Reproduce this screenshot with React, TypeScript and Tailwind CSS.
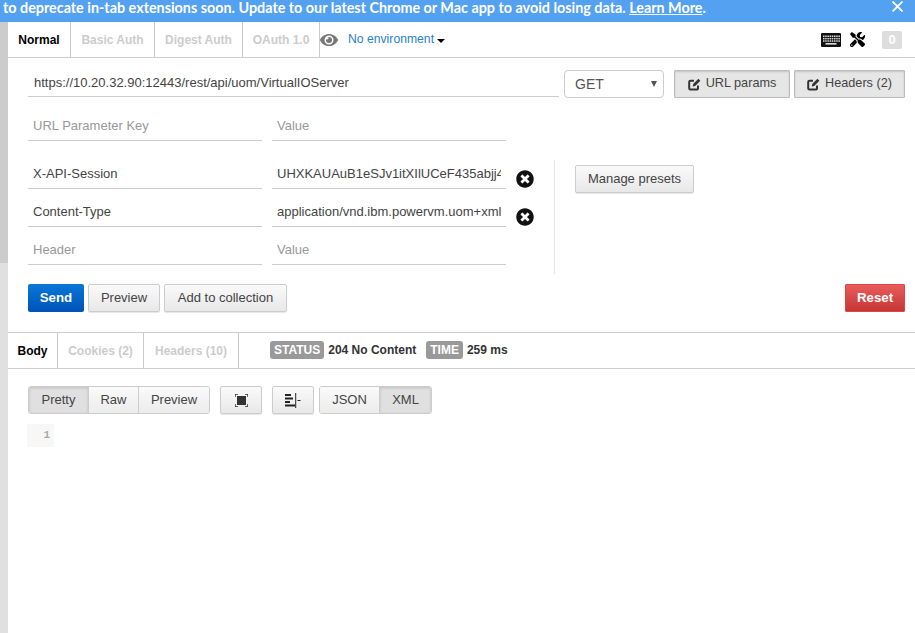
import { FaEye, FaTimesCircle, FaTools } from "react-icons/fa";

function Keyboard() {
  const keys = [];
  for (let r = 0; r < 3; r++) {
    for (let c = 0; c < 8; c++) {
      keys.push(<rect key={`${r}-${c}`} x={2 + c * 2.2} y={2.5 + r * 2.4} width="1.5" height="1.5" fill="#ddd" />);
    }
  }
  return (
    <svg width="20" height="14" viewBox="0 0 20 14">
      <rect width="20" height="14" rx="1" fill="#111" />
      {keys}
      <rect x="4.5" y="10" width="11" height="1.6" fill="#ddd" />
    </svg>
  );
}

function EditIcon() {
  return (
    <svg width="13" height="13" viewBox="0 0 13 13" fill="none">
      <path d="M10 7.5V10.5Q10 11.5 9 11.5H2.5Q1.2 11.5 1.2 10.2V4Q1.2 2.8 2.5 2.8H6" stroke="#333" strokeWidth="2" />
      <path d="M4.8 8.4L5.2 6L10.4 0.8L12.4 2.8L7.2 8Z" fill="#333" />
    </svg>
  );
}

function Field({ value, placeholder, w }: { value?: string; placeholder?: string; w: string }) {
  return (
    <div className={`${w} h-[38px] flex items-end pb-[6px] px-[5px] border-b border-[#ccc] text-[13px] leading-[17px] ${value ? "text-[#444]" : "text-[#999]"}`}>
      <span className="block w-full overflow-hidden whitespace-nowrap">{value || placeholder}</span>
    </div>
  );
}

function Row({ k, v, remove }: { k?: string; v?: string; remove?: boolean }) {
  return (
    <div className="flex items-end gap-[10px]">
      <Field value={k} placeholder={k ? undefined : "Header"} w="w-[234px]" />
      <Field value={v} placeholder={v ? undefined : "Value"} w="w-[234px]" />
      {remove && <FaTimesCircle className="text-[18px] text-[#111] mb-[1px]" />}
    </div>
  );
}

const tabOff = "h-full flex items-center justify-center border-r border-[#ccc] font-bold text-[#ccc] text-[12px]";
const btn = "flex items-center justify-center border border-[#ccc] rounded-[2px] text-[#444] text-[13px] bg-gradient-to-b from-[#fafafa] to-[#e8e8e8] shadow-[0_1px_1px_rgba(0,0,0,0.1)]";
const seg = "h-full flex items-center justify-center text-[#444] text-[13px]";
const segOn = "bg-[#e0e0e0] shadow-[inset_0_1px_3px_rgba(0,0,0,0.15)]";
const segOff = "bg-gradient-to-b from-[#fafafa] to-[#ececec]";
const toggle = "h-[28px] flex items-center justify-center gap-[5px] border border-[#bbb] bg-[#e6e6e6] rounded-[1px] text-[12.7px] text-[#444] shadow-[inset_0_1px_2px_rgba(0,0,0,0.15)]";

export default function App() {
  return (
    <div className="w-[915px] h-[633px] overflow-hidden bg-white flex flex-col font-['Liberation_Sans',sans-serif]">
      <div className="h-[22px] shrink-0 bg-[#54a1f2] text-white flex items-start pl-[3px] pr-[12px] justify-between font-['Lato',sans-serif] font-bold text-[14.35px] leading-[15px] whitespace-nowrap">
        <span>
          to deprecate in-tab extensions soon. Update to our latest Chrome or Mac app to avoid losing data. <span className="underline">Learn More</span>.
        </span>
        <svg width="11" height="11" viewBox="0 0 11 11" stroke="white" strokeWidth="1.8" className="mt-[1px]">
          <path d="M.5 .5 L10.5 10.5 M10.5 .5 L.5 10.5" />
        </svg>
      </div>

      <div className="flex-1 flex min-h-0">
        <div className="w-[8px] shrink-0 flex flex-col">
          <div className="h-[241px] bg-[#ccc]" />
          <div className="flex-1 bg-[#e0e0e0]" />
        </div>

        <div className="flex-1 min-w-0 flex flex-col">
          <div className="h-[36px] shrink-0 flex items-center border-b border-[#ccc]">
            <div className="w-[63px] h-full flex items-center justify-center border-r border-[#ccc] font-bold text-black text-[12px] bg-white">Normal</div>
            <div className={`w-[84px] ${tabOff}`}>Basic Auth</div>
            <div className={`w-[88px] ${tabOff}`}>Digest Auth</div>
            <div className={`w-[77px] ${tabOff}`}>OAuth 1.0</div>
            <FaEye className="text-[18px] text-[#777]" />
            <span className="ml-[10px] text-[12.2px] text-[#2a7fc9]">No environment</span>
            <span className="ml-[3px] mt-[2px] w-0 h-0 border-x-[4px] border-x-transparent border-t-[4px] border-t-black" />
            <div className="ml-auto flex items-center mr-[13px]">
              <Keyboard />
              <FaTools className="text-[15px] text-black ml-[9px]" />
              <span className="ml-[17px] w-[20px] h-[18px] bg-[#ddd] rounded-[2px] text-white font-bold text-[13px] flex items-center justify-center">0</span>
            </div>
          </div>

          <div className="flex items-end pl-[20px] pr-[10px] h-[40px] shrink-0">
            <div className="w-[531px] h-[30px] mb-[1px] pt-[2px] flex items-center px-[6px] border-b border-[#ccc] text-[13px] text-[#444] whitespace-nowrap">
              https://10.20.32.90:12443/rest/api/uom/VirtualIOServer
            </div>
            <div className="ml-[5px] w-[100px] h-[28px] flex items-center justify-between pl-[10px] pr-[6px] border border-[#ccc] rounded-[4px] text-[14px] text-[#555]">
              GET
              <span className="w-0 h-0 border-x-[3.5px] border-x-transparent border-t-[6px] border-t-[#555]" />
            </div>
            <div className={`ml-[10px] w-[116px] ${toggle}`}>
              <EditIcon />URL params
            </div>
            <div className={`ml-[4px] w-[111px] ${toggle}`}>
              <EditIcon />Headers (2)
            </div>
          </div>

          <div className="pl-[20px] flex gap-[10px] h-[43px] shrink-0 items-end">
            <Field placeholder="URL Parameter Key" w="w-[234px]" />
            <Field placeholder="Value" w="w-[234px]" />
          </div>

          <div className="pl-[20px] flex mt-[10px] shrink-0">
            <div className="flex flex-col">
              <Row k="X-API-Session" v="UHXKAUAuB1eSJv1itXIlUCeF435abjj4" remove />
              <Row k="Content-Type" v="application/vnd.ibm.powervm.uom+xml" remove />
              <Row />
            </div>
            <div className="ml-[20px] h-[114px] mt-[9px] pl-[20px] border-l border-[#e5e5e5]">
              <div className={`${btn} w-[119px] h-[28px] mt-[5px]`}>Manage presets</div>
            </div>
          </div>

          <div className="pl-[20px] pr-[10px] flex items-center h-[28px] mt-[10px] shrink-0">
            <div className="w-[56px] h-full flex items-center justify-center rounded-[2px] bg-gradient-to-b from-[#0a78d8] to-[#0052b8] text-white font-bold text-[13.3px]">Send</div>
            <div className={`${btn} ml-[4px] w-[72px] h-full`}>Preview</div>
            <div className={`${btn} ml-[4px] w-[123px] h-full text-[13.3px]`}>Add to collection</div>
            <div className="ml-auto w-[60px] h-full flex items-center justify-center rounded-[1px] border border-[#d44] bg-gradient-to-b from-[#e85c5c] to-[#c53535] text-white font-bold text-[13.3px]">Reset</div>
          </div>

          <div className="mt-[20px] h-[37px] shrink-0 flex items-center border-t border-b border-[#ccc]">
            <div className="w-[50px] h-full flex items-center justify-center border-r border-[#ccc] font-bold text-black text-[12px]">Body</div>
            <div className={`w-[86px] ${tabOff}`}>Cookies (2)</div>
            <div className={`w-[95px] ${tabOff}`}>Headers (10)</div>
            <span className="ml-[31px] mb-[2px] h-[18px] px-[4px] bg-[#999] rounded-[3px] text-white font-bold text-[12px] flex items-center">STATUS</span>
            <span className="ml-[4px] mb-[2px] text-[12px] font-bold text-[#333]">204 No Content</span>
            <span className="ml-[10px] mb-[2px] h-[18px] px-[4px] bg-[#999] rounded-[3px] text-white font-bold text-[12px] flex items-center">TIME</span>
            <span className="ml-[4px] mb-[2px] text-[12px] font-bold text-[#333]">259 ms</span>
          </div>

          <div className="pl-[20px] mt-[17px] flex items-center h-[28px] shrink-0">
            <div className="flex h-full border border-[#ccc] rounded-[3px] overflow-hidden">
              <div className={`${seg} ${segOn} w-[60px] border-r border-[#ccc]`}>Pretty</div>
              <div className={`${seg} ${segOff} w-[50px] border-r border-[#ccc]`}>Raw</div>
              <div className={`${seg} ${segOff} w-[70px]`}>Preview</div>
            </div>
            <div className={`${btn} ml-[10px] w-[42px] h-full`}>
              <svg width="13" height="13" viewBox="0 0 13 13" fill="#333">
                <rect x="2" y="2" width="9" height="9" />
                <path d="M0 3V0H3V.7H.7V3ZM10 0H13V3H12.3V.7H10ZM0 10H.7V12.3H3V13H0ZM12.3 10H13V13H10V12.3H12.3Z" />
              </svg>
            </div>
            <div className={`${btn} ml-[10px] w-[42px] h-full`}>
              <svg width="16" height="15" viewBox="0 0 16 15" fill="#222">
                <path d="M0 1H6V3H0ZM0 4.5H8V6.5H0ZM0 8H5V10H0ZM0 11.5H10V13.5H0ZM10.2 0H11.2V15H10.2ZM12.5 7H15.5V8H12.5Z" />
              </svg>
            </div>
            <div className="ml-[5px] flex h-full border border-[#ccc] rounded-[3px] overflow-hidden">
              <div className={`${seg} ${segOff} w-[60px] border-r border-[#ccc]`}>JSON</div>
              <div className={`${seg} ${segOn} w-[51px]`}>XML</div>
            </div>
          </div>

          <div className="ml-[19px] mt-[10px] w-[27px] h-[23px] shrink-0 bg-[#f7f7f7] flex items-center justify-end pr-[4px] font-['Liberation_Mono',monospace] font-bold text-[11px] text-[#aaa]">1</div>
        </div>
      </div>
    </div>
  );
}
